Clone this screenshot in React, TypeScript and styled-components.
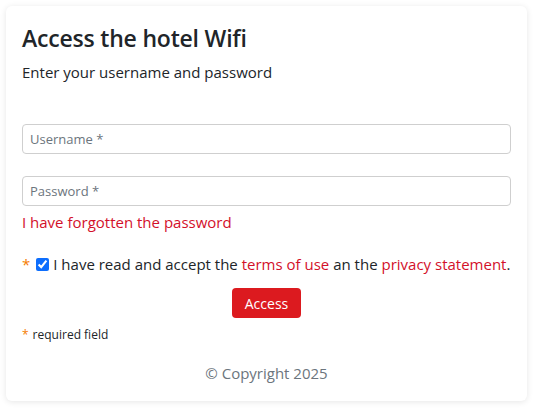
import React, { useState } from "react";
import styled, { createGlobalStyle } from "styled-components";

const GlobalStyle = createGlobalStyle`
  * { box-sizing: border-box; }
  body {
    margin: 0;
    background: #ffffff;
    font-family: "Open Sans", "Noto Sans", sans-serif;
    color: #212529;
  }
`;

const Page = styled.div`
  padding: 6px 8px 10px 6px;
`;

const Card = styled.form`
  background: #fff;
  border-radius: 6px;
  box-shadow: 0 1px 6px rgba(0, 0, 0, 0.1);
  padding: 18px 16px 17px 16px;
  display: flex;
  flex-direction: column;
`;

const Title = styled.h1`
  margin: 0;
  font-size: 23px;
  font-weight: 600;
  line-height: 28px;
  letter-spacing: -0.2px;
`;

const Subtitle = styled.p`
  margin: 9px 0 0;
  font-size: 15px;
  line-height: 22px;
`;

const Input = styled.input<{ $gap: number }>`
  margin-top: ${(p) => p.$gap}px;
  height: 30px;
  width: 100%;
  border: 1px solid #cfcfcf;
  border-radius: 4px;
  padding: 0 7px;
  font-family: inherit;
  font-size: 13px;
  color: #212529;
  &::placeholder { color: #6c757d; }
`;

const Link = styled.a`
  color: #d3102a;
  text-decoration: none;
  cursor: pointer;
`;

const Forgot = styled(Link)`
  margin-top: 5px;
  font-size: 15px;
  line-height: 22px;
`;

const Star = styled.span`
  color: #f57c00;
  margin-right: 4px;
`;

const AcceptRow = styled.label`
  margin-top: 20px;
  display: flex;
  align-items: center;
  font-size: 15px;
  line-height: 22px;
`;

const Check = styled.input`
  width: 13px;
  height: 13px;
  margin: 0 4px 0 2px;
  accent-color: #0d6efd;
`;

const ButtonRow = styled.div`
  margin-top: 13px;
  display: flex;
  justify-content: center;
`;

const Button = styled.button`
  background: #dc1a1f;
  color: #fff;
  border: none;
  border-radius: 4px;
  height: 30px;
  padding: 0 13px;
  font-family: inherit;
  font-size: 14px;
  cursor: pointer;
`;

const Required = styled.div`
  margin-top: 9px;
  font-size: 12px;
  line-height: 16px;
`;

const Copyright = styled.div`
  margin-top: 19px;
  text-align: center;
  color: #6c757d;
  font-size: 15px;
  line-height: 22px;
`;

export default function App() {
  const [accepted, setAccepted] = useState(true);
  return (
    <>
      <GlobalStyle />
      <Page>
        <Card onSubmit={(e) => e.preventDefault()}>
          <Title>Access the hotel Wifi</Title>
          <Subtitle>Enter your username and password</Subtitle>
          <Input $gap={41} type="text" placeholder="Username *" />
          <Input $gap={22} type="password" placeholder="Password *" />
          <Forgot>I have forgotten the password</Forgot>
          <AcceptRow>
            <Star>*</Star>
            <Check
              type="checkbox"
              checked={accepted}
              onChange={(e) => setAccepted(e.target.checked)}
            />
            I have read and accept the&nbsp;<Link>terms of use</Link>&nbsp;an the&nbsp;
            <Link>privacy statement</Link>.
          </AcceptRow>
          <ButtonRow>
            <Button type="submit">Access</Button>
          </ButtonRow>
          <Required>
            <Star>*</Star>required field
          </Required>
          <Copyright>© Copyright 2025</Copyright>
        </Card>
      </Page>
    </>
  );
}
